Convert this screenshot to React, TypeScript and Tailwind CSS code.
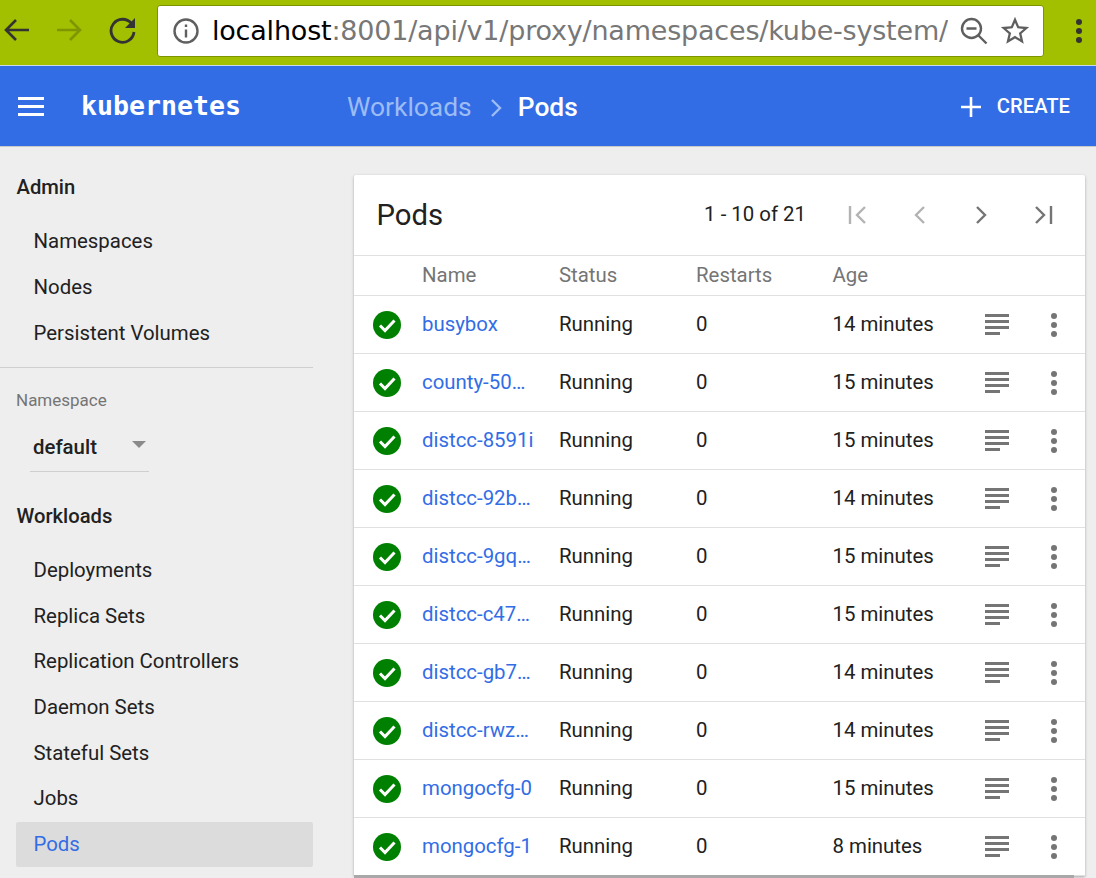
import React from 'react';

interface Pod {
  name: string;
  age: string;
}

const PODS: Pod[] = [
  { name: 'busybox', age: '14 minutes' },
  { name: 'county-50…', age: '15 minutes' },
  { name: 'distcc-8591i', age: '15 minutes' },
  { name: 'distcc-92b…', age: '14 minutes' },
  { name: 'distcc-9gq…', age: '15 minutes' },
  { name: 'distcc-c47…', age: '15 minutes' },
  { name: 'distcc-gb7…', age: '14 minutes' },
  { name: 'distcc-rwz…', age: '14 minutes' },
  { name: 'mongocfg-0', age: '15 minutes' },
  { name: 'mongocfg-1', age: '8 minutes' },
];

const WORKLOADS = ['Deployments', 'Replica Sets', 'Replication Controllers', 'Daemon Sets', 'Stateful Sets', 'Jobs'];

function BrowserBar() {
  return (
    <div className="h-[66px] bg-[#a2bf00] flex items-start shrink-0 border-b border-[#c9d9e8]">
      <svg width="32" height="32" viewBox="0 0 32 32" className="ml-[1px] mt-[14px]" fill="none" stroke="#333" strokeWidth="2.6">
        <path d="M28 16H5M15 6L5 16l10 10" />
      </svg>
      <svg width="32" height="32" viewBox="0 0 32 32" className="ml-[21px] mt-[14px]" fill="none" stroke="#7f9600" strokeWidth="2.6">
        <path d="M3 16h23M16 6l10 10-10 10" />
      </svg>
      <svg width="30" height="30" viewBox="0 0 30 30" className="ml-[22px] mt-[15px]" fill="none">
        <path d="M23.5 8.5A11.5 11.5 0 1 0 26 17" stroke="#333" strokeWidth="2.8" />
        <path d="M27 3v10H17z" fill="#333" />
      </svg>
      <div className="ml-[19px] mt-[5px] w-[887px] h-[52px] bg-white rounded-[3px] border border-[#7d9400] flex items-center font-['DejaVu_Sans',sans-serif]">
        <svg width="28" height="28" viewBox="0 0 28 28" className="ml-[14px]" fill="none">
          <circle cx="14" cy="14" r="11.5" stroke="#5f5f5f" strokeWidth="2.4" />
          <path d="M12.8 12.5h2.4v8h-2.4zM12.8 7.5h2.4V10h-2.4z" fill="#5f5f5f" />
        </svg>
        <div className="ml-[12px] w-[736px] text-[27px] leading-[30px] whitespace-nowrap overflow-hidden tracking-[-0.2px]">
          <span className="text-black">localhost</span>
          <span className="text-[#777]">:8001/api/v1/proxy/namespaces/kube-system/</span>
        </div>
        <svg width="30" height="30" viewBox="0 0 30 30" className="ml-[11px]" fill="none" stroke="#5f5f5f" strokeWidth="2.4">
          <circle cx="12.5" cy="12.5" r="9.5" />
          <path d="M7.5 12.5h10M19.5 19.5l8 8" />
        </svg>
        <svg width="34" height="34" viewBox="0 0 24 24" className="ml-[9px]" fill="#5f5f5f">
          <path d="M22 9.24l-7.19-.62L12 2 9.19 8.63 2 9.24l5.46 4.73L5.82 21 12 17.27 18.18 21l-1.63-7.03L22 9.24zM12 15.4l-3.76 2.27 1-4.28-3.32-2.88 4.38-.38L12 6.1l1.71 4.04 4.38.38-3.32 2.88 1 4.28L12 15.4z" />
        </svg>
      </div>
      <div className="ml-[32px] mt-[19px] flex flex-col gap-[3px]">
        <div className="w-[6px] h-[6px] rounded-full bg-[#333]" />
        <div className="w-[6px] h-[6px] rounded-full bg-[#333]" />
        <div className="w-[6px] h-[6px] rounded-full bg-[#333]" />
      </div>
    </div>
  );
}

function Header() {
  return (
    <div className="h-[81px] bg-[#326de6] flex items-center shrink-0 border-b border-[#c8c8c8] text-white">
      <div className="ml-[18px] w-[26px] flex flex-col gap-[5px]">
        <div className="h-[3px] bg-white" />
        <div className="h-[3px] bg-white" />
        <div className="h-[3px] bg-white" />
      </div>
      <div className="ml-[37px] w-[266px] font-['DejaVu_Sans_Mono',monospace] font-bold text-[26.6px] leading-none mt-[1px]">kubernetes</div>
      <div className="text-[26.4px] text-[#9dbcf4] leading-none mt-[3px]">Workloads</div>
      <svg width="16" height="20" viewBox="0 0 16 20" className="ml-[16px] mt-[3px]" fill="none" stroke="#9dbcf4" strokeWidth="2.4">
        <path d="M4 2l8 8-8 8" />
      </svg>
      <div className="ml-[14px] text-[26.4px] font-medium leading-none mt-[3px]">Pods</div>
      <svg width="24" height="24" viewBox="0 0 24 24" className="ml-auto mt-[2px]" fill="none" stroke="white" strokeWidth="2.6">
        <path d="M12 2v20M2 12h20" />
      </svg>
      <div className="ml-[14px] mr-[26px] text-[20.2px] font-medium leading-none mt-[1px]">CREATE</div>
    </div>
  );
}

function NavItem({ label }: { label: string }) {
  return <div className="h-[45.6px] pl-[33.5px] flex items-center text-[20.4px] text-[#212121]">{label}</div>;
}

function Sidebar() {
  return (
    <div className="w-[354px] shrink-0 pt-[17px]">
      <div className="pl-[16.5px] text-[20.2px] font-medium text-[#212121] h-[47px] leading-[46px]">Admin</div>
      <div className="pt-[8px]">
        <NavItem label="Namespaces" />
        <NavItem label="Nodes" />
        <NavItem label="Persistent Volumes" />
      </div>
      <div className="w-[313px] h-px bg-[#cfcfcf] mt-[11px]" />
      <div className="pl-[16px] mt-[21px] text-[17px] leading-[22px] text-[#757575]">Namespace</div>
      <div className="ml-[30px] mt-[17px] w-[119px] h-[44px] border-b border-[#cfcfcf] flex items-start pt-[4px]">
        <span className="ml-[3px] text-[20.4px] leading-[30px] font-medium text-[#212121]">default</span>
        <div className="ml-auto mr-[3px] mt-[9px] w-0 h-0 border-l-[7px] border-r-[7px] border-t-[7px] border-l-transparent border-r-transparent border-t-[#8a8a8a]" />
      </div>
      <div className="pl-[16.5px] mt-[21px] text-[20.2px] font-medium text-[#212121] h-[47px] leading-[46px]">Workloads</div>
      <div className="pt-[8px]">
        {WORKLOADS.map((w) => (
          <NavItem key={w} label={w} />
        ))}
      </div>
      <div className="ml-[16px] mt-[1px] w-[297px] h-[45px] pb-[1px] rounded-[2px] bg-[#dcdcdc] pl-[17.5px] flex items-center text-[20.4px] text-[#326de6]">Pods</div>
    </div>
  );
}

function Pager() {
  return (
    <div className="flex items-center ml-auto">
      <span className="text-[20.4px] text-[#212121] -mt-[1px]">1 - 10 of 21</span>
      <svg width="24" height="24" viewBox="0 0 24 24" className="ml-[40px]" fill="none" stroke="#b3b3b3" strokeWidth="2.4">
        <path d="M4 3v18M19 4l-8 8 8 8" />
      </svg>
      <svg width="24" height="24" viewBox="0 0 24 24" className="ml-[39px]" fill="none" stroke="#b3b3b3" strokeWidth="2.4">
        <path d="M15 4l-8 8 8 8" />
      </svg>
      <svg width="24" height="24" viewBox="0 0 24 24" className="ml-[35px]" fill="none" stroke="#757575" strokeWidth="2.4">
        <path d="M9 4l8 8-8 8" />
      </svg>
      <svg width="24" height="24" viewBox="0 0 24 24" className="ml-[39px] mr-[30px]" fill="none" stroke="#757575" strokeWidth="2.4">
        <path d="M20 3v18M5 4l8 8-8 8" />
      </svg>
    </div>
  );
}

function PodRow({ pod }: { pod: Pod }) {
  return (
    <div className="h-[58px] border-b border-[#e0e0e0] flex items-center text-[20.4px] text-[#212121]">
      <svg width="30" height="30" viewBox="0 0 30 30" className="ml-[18px] shrink-0">
        <circle cx="15" cy="15" r="14" fill="#008000" />
        <path d="M8 15.5l5 5 9.5-10" fill="none" stroke="white" strokeWidth="3" />
      </svg>
      <div className="ml-[20px] w-[137px] text-[#326de6] whitespace-nowrap">{pod.name}</div>
      <div className="w-[137px]">Running</div>
      <div className="w-[136.5px]">0</div>
      <div className="w-[152.5px]">{pod.age}</div>
      <div className="flex flex-col gap-[3px] w-[24px] shrink-0">
        <div className="h-[3px] bg-[#757575]" />
        <div className="h-[3px] bg-[#757575]" />
        <div className="h-[3px] bg-[#757575]" />
        <div className="h-[3px] w-[15px] bg-[#757575]" />
      </div>
      <div className="ml-[42px] flex flex-col gap-[3px] shrink-0">
        <div className="w-[6px] h-[6px] rounded-full bg-[#757575]" />
        <div className="w-[6px] h-[6px] rounded-full bg-[#757575]" />
        <div className="w-[6px] h-[6px] rounded-full bg-[#757575]" />
      </div>
    </div>
  );
}

export default function App() {
  return (
    <div className="w-[1096px] h-[878px] overflow-hidden flex flex-col bg-[#eeeeee] font-['Roboto',sans-serif] relative">
      <BrowserBar />
      <Header />
      <div className="flex flex-1 min-h-0 relative">
        <Sidebar />
        <div className="w-[731px] mt-[28px] bg-white rounded-t-[2px] shadow-[0_1px_3px_rgba(0,0,0,0.3)] self-start">
          <div className="h-[81px] border-b border-[#e0e0e0] flex items-center">
            <div className="ml-[22.5px] mt-[1px] text-[29.3px] text-[#212121]">Pods</div>
            <Pager />
          </div>
          <div className="h-[40px] border-b border-[#e0e0e0] flex items-center text-[20.4px] text-[#757575] pl-[68px]">
            <div className="w-[137px]">Name</div>
            <div className="w-[137px]">Status</div>
            <div className="w-[136.5px]">Restarts</div>
            <div>Age</div>
          </div>
          {PODS.map((p) => (
            <PodRow key={p.name} pod={p} />
          ))}
        </div>
        <div className="absolute left-[354px] bottom-0 w-[720px] h-[3px] bg-[#a8a8a8]" />
      </div>
    </div>
  );
}
